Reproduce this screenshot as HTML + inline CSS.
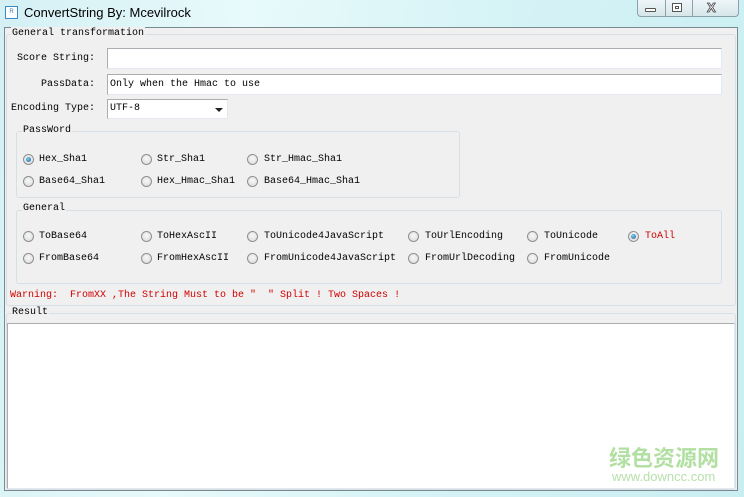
<!DOCTYPE html>
<html><head><meta charset="utf-8"><style>
*{margin:0;padding:0;box-sizing:border-box}
body{width:744px;height:497px;overflow:hidden;position:relative;background:linear-gradient(100deg,#d4f0f4 0%,#e8fafb 30%,#d6f3f6 60%,#c9eef2 100%);font-family:"Liberation Mono","Noto Sans CJK SC",monospace;font-size:10px;color:#000}
.a{position:absolute}
.t{position:absolute;white-space:pre;line-height:15px}
.title{left:24px;top:5px;font:13px "Liberation Sans",sans-serif;color:#000}
.client{left:4px;top:27px;width:734px;height:464px;background:#f0f0f0;border:1px solid #7a8a90}
.grp{position:absolute;border:1px solid #d5dfe5;border-radius:3px}
.leg{position:absolute;background:#f0f0f0;padding:0 1px;white-space:pre;line-height:14px}
.inp{position:absolute;background:#fff;border:1px solid #abadb3;border-right-color:#e3e9ef;border-bottom-color:#e3e9ef}
.r{position:absolute;width:11px;height:11px;border-radius:50%;border:1px solid #8e8f8f;background:radial-gradient(circle at 50% 40%,#f8f8f8,#d8d8d8)}
.r.on::after{content:"";position:absolute;left:2px;top:2px;width:5px;height:5px;border-radius:50%;background:radial-gradient(circle at 40% 35%,#7fd0f0,#1a5b95)}
</style></head><body>
<div class="a" style="left:5px;top:6px;width:13px;height:13px;border:1px solid #3a8ac8;background:#fff;font:6px 'Liberation Sans';color:#3a7ab0;text-align:center;line-height:11px">R</div>
<div class="t title">ConvertString By: Mcevilrock</div>
<div class="a" style="left:637px;top:0;width:102px;height:17px;border:1px solid #8aa0aa;border-top:none;border-radius:0 0 4px 4px;background:linear-gradient(#eef6f8,#d6e6ea)"></div>
<div class="a" style="left:665px;top:0;width:1px;height:17px;background:#8aa0aa"></div>
<div class="a" style="left:692px;top:0;width:1px;height:17px;background:#8aa0aa"></div>
<div class="a" style="left:645px;top:8px;width:11px;height:4px;border:1px solid #555;background:#fff;border-radius:1px"></div>
<div class="a" style="left:672px;top:3px;width:10px;height:9px;border:1px solid #555;background:#fff"><div style="margin:2px;height:3px;border:1px solid #555"></div></div>
<div class="t" style="left:707px;top:0px;font:bold 13px 'Liberation Sans';color:#fff;-webkit-text-stroke:0.8px #444">X</div>
<div class="a client"></div>
<div class="grp" style="left:6px;top:34px;width:730px;height:272px"></div>
<div class="leg" style="left:11px;top:27px">General transformation</div>
<div class="t" style="left:17px;top:51px">Score String:</div>
<div class="t" style="left:41px;top:77px">PassData:</div>
<div class="t" style="left:11px;top:101px">Encoding Type:</div>
<div class="inp" style="left:107px;top:48px;width:615px;height:21px"></div>
<div class="inp" style="left:107px;top:74px;width:615px;height:21px"></div>
<div class="t" style="left:110px;top:77px">Only when the Hmac to use</div>
<div class="inp" style="left:107px;top:99px;width:121px;height:20px"></div>
<div class="t" style="left:110px;top:101px">UTF-8</div>
<div class="a" style="left:215px;top:108px;border-left:4px solid transparent;border-right:4px solid transparent;border-top:4px solid #222"></div>
<div class="grp" style="left:16px;top:131px;width:444px;height:67px"></div>
<div class="leg" style="left:22px;top:124px">PassWord</div>
<div class="r on" style="left:23px;top:154px"></div><div class="t" style="left:39px;top:152px">Hex_Sha1</div>
<div class="r" style="left:141px;top:154px"></div><div class="t" style="left:157px;top:152px">Str_Sha1</div>
<div class="r" style="left:247px;top:154px"></div><div class="t" style="left:264px;top:152px">Str_Hmac_Sha1</div>
<div class="r" style="left:23px;top:176px"></div><div class="t" style="left:39px;top:174px">Base64_Sha1</div>
<div class="r" style="left:141px;top:176px"></div><div class="t" style="left:157px;top:174px">Hex_Hmac_Sha1</div>
<div class="r" style="left:247px;top:176px"></div><div class="t" style="left:264px;top:174px">Base64_Hmac_Sha1</div>
<div class="grp" style="left:16px;top:210px;width:706px;height:74px"></div>
<div class="leg" style="left:22px;top:202px">General</div>
<div class="r" style="left:23px;top:231px"></div><div class="t" style="left:39px;top:229px">ToBase64</div>
<div class="r" style="left:141px;top:231px"></div><div class="t" style="left:157px;top:229px">ToHexAscII</div>
<div class="r" style="left:247px;top:231px"></div><div class="t" style="left:264px;top:229px">ToUnicode4JavaScript</div>
<div class="r" style="left:408px;top:231px"></div><div class="t" style="left:425px;top:229px">ToUrlEncoding</div>
<div class="r" style="left:527px;top:231px"></div><div class="t" style="left:544px;top:229px">ToUnicode</div>
<div class="r on" style="left:628px;top:231px"></div><div class="t" style="left:645px;top:229px;color:#d00000">ToAll</div>
<div class="r" style="left:23px;top:253px"></div><div class="t" style="left:39px;top:251px">FromBase64</div>
<div class="r" style="left:141px;top:253px"></div><div class="t" style="left:157px;top:251px">FromHexAscII</div>
<div class="r" style="left:247px;top:253px"></div><div class="t" style="left:264px;top:251px">FromUnicode4JavaScript</div>
<div class="r" style="left:408px;top:253px"></div><div class="t" style="left:425px;top:251px">FromUrlDecoding</div>
<div class="r" style="left:527px;top:253px"></div><div class="t" style="left:544px;top:251px">FromUnicode</div>
<div class="t" style="left:10px;top:288px;color:#d00000">Warning:  FromXX ,The String Must to be "  " Split ! Two Spaces !</div>
<div class="grp" style="left:6px;top:313px;width:730px;height:177px"></div>
<div class="leg" style="left:11px;top:306px">Result</div>
<div class="inp" style="left:7px;top:323px;width:728px;height:166px"></div>
<div class="t" style="left:609px;top:442px;font:bold 22px 'Noto Sans CJK SC',sans-serif;color:#b2e0a2;line-height:30px">绿色资源网</div>
<div class="t" style="left:612px;top:469px;font:13px 'Liberation Sans',sans-serif;color:#b8e0ac;line-height:15px">www.downcc.com</div>
</body></html>
